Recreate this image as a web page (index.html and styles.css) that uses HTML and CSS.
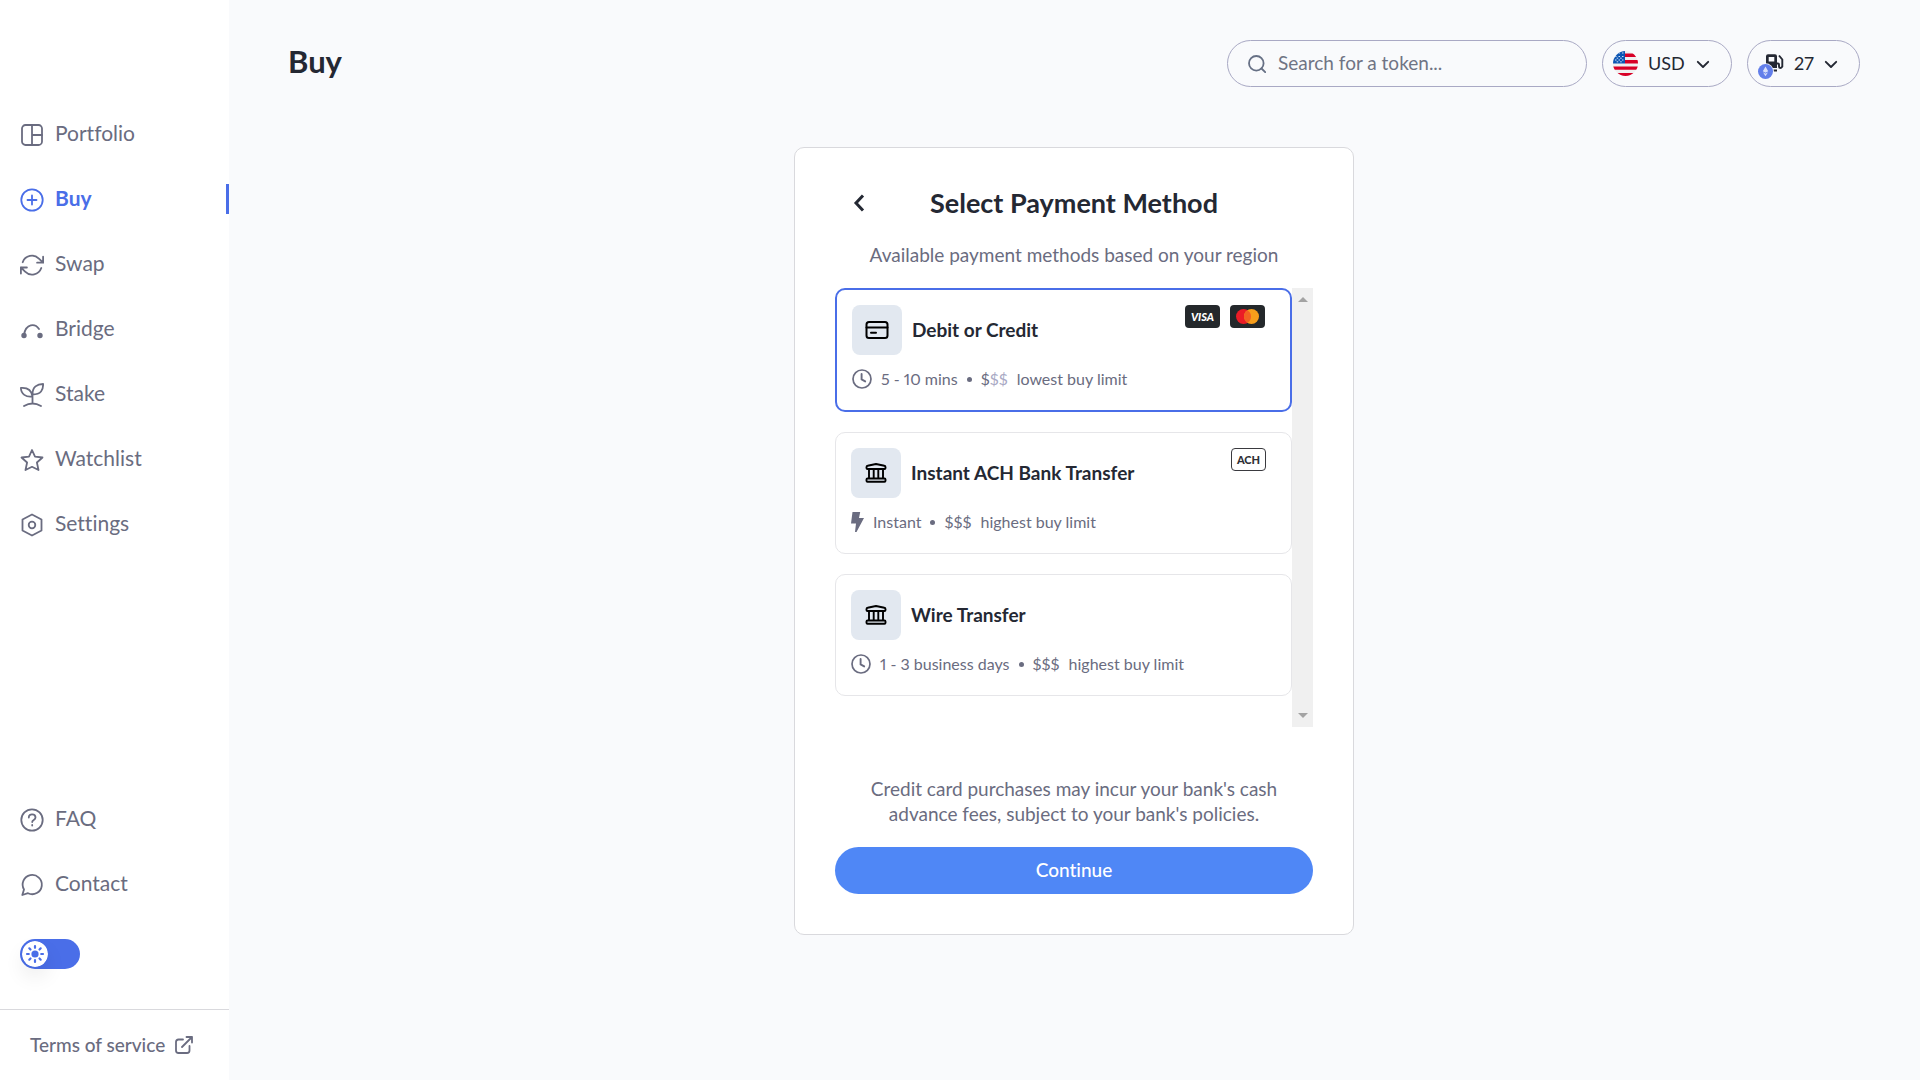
FILE: index.html
```html
<!DOCTYPE html>
<html lang="en">
<head>
<meta charset="utf-8">
<meta name="viewport" content="width=device-width, initial-scale=1">
<title>Buy</title>
<link rel="stylesheet" href="styles.css">
</head>
<body>
<svg class="sprite" aria-hidden="true">
  <symbol id="clock" viewBox="0 0 20 20"><circle cx="10" cy="10" r="9" fill="none" stroke="currentColor" stroke-width="1.700"/><path d="M9.600 5v5.400l3.600 2" fill="none" stroke="currentColor" stroke-width="1.900" stroke-linecap="round" stroke-linejoin="round"/></symbol>
  <symbol id="bank" viewBox="0 0 24 24"><path d="M2.500 6.300Q2.500 5 3.600 4.800L12 3l8.400 1.800Q21.500 5 21.500 6.300V7q0 1-1 1h-17q-1 0-1-1zM5 8.500v8.500M9.700 8.500v8.500M14.300 8.500v8.500M19 8.500v8.500M3.500 17.500h17q1 0 1 1v1.200q0 1-1 1h-17q-1 0-1-1v-1.200q0-1 1-1z" fill="none" stroke="currentColor" stroke-width="1.900" stroke-linejoin="round"/></symbol>
  <symbol id="chevron" viewBox="0 0 14 14"><path d="M1.800 4.800 7 10l5.200-5.200" fill="none" stroke="currentColor" stroke-width="1.900" stroke-linecap="round" stroke-linejoin="round"/></symbol>
</svg>
<div class="app">
  <aside class="sidebar">
    <nav class="nav" aria-label="Main">
      <a class="nav-link" href="#portfolio"><svg class="icon" viewBox="0 0 24 24"><rect x="2" y="2" width="20" height="20" rx="3.500"/><path d="M12 2v20M12 12h10"/></svg>Portfolio</a>
      <a class="nav-link active" href="#buy" aria-current="page"><svg class="icon" viewBox="0 0 24 24"><circle cx="12" cy="12" r="10.700"/><path d="M12 7.500v9M7.500 12h9"/></svg>Buy</a>
      <a class="nav-link" href="#swap"><svg class="icon" viewBox="0 0 24 24"><path d="M23.100 3.700v6h-6M.9 20.500v-6h6M2.700 9.200a9.800 9.800 0 0 1 16.200-3.600l4.200 4.100M.9 14.500l4.200 4.100A9.800 9.800 0 0 0 21.300 15"/></svg>Swap</a>
      <a class="nav-link" href="#bridge"><svg class="icon" viewBox="0 0 24 24"><path d="M4 16.500C6 5.500 15 5 19 11"/><circle class="solid" cx="4" cy="17.500" r="1.800"/><circle class="solid" cx="20" cy="17.500" r="1.800"/></svg>Bridge</a>
      <a class="nav-link" href="#stake"><svg class="icon" viewBox="0 0 24 24"><path d="M12.500 20.500V11C12.500 4 17 1 23.100 1 23.300 7 21 11.500 12.500 11.500M12.500 13.500C6 14.500 1 11 .9 5 7 4.500 11.500 7 12.500 13.500M4 23q8.500-5 17 0"/></svg>Stake</a>
      <a class="nav-link" href="#watchlist"><svg class="icon" viewBox="0 0 24 24"><path d="m12 2 3 6.700 7.500.8-5.600 5 1.600 7.500-6.500-3.200L5.500 22l1.600-7.500-5.600-5 7.500-.8z"/></svg>Watchlist</a>
      <a class="nav-link" href="#settings"><svg class="icon" viewBox="0 0 24 24"><path d="M12 1.500 21.500 6.500v11L12 22.500 2.500 17.500v-11z"/><circle cx="12" cy="12" r="3.300"/></svg>Settings</a>
    </nav>
    <nav class="nav nav-help" aria-label="Help">
      <a class="nav-link" href="#faq"><svg class="icon" viewBox="0 0 24 24"><circle cx="12" cy="12" r="10.700"/><path d="M8.800 9.500C8.800 5 15.500 5.500 15.500 9.500c0 2.500-3.300 2.300-3.300 4.500M12.200 17v.5"/></svg>FAQ</a>
      <a class="nav-link" href="#contact"><svg class="icon" viewBox="0 0 24 24"><path d="m2.300 22 1.700-5.500a9.600 9.600 0 1 1 4 3.700z"/></svg>Contact</a>
    </nav>
    <label class="switch">
      <input class="hidden-input" type="checkbox" aria-label="Light theme" checked>
      <svg class="thumb" viewBox="0 0 26 26"><circle cx="13" cy="13" r="13" fill="#fff"/><circle cx="13" cy="13" r="3.600" fill="#4a6ee8"/><path d="M13 5v1.800M13 19.200V21M5 13h1.800M19.200 13H21M7.300 7.300l1.200 1.200M17.500 17.500l1.200 1.200M7.300 18.700l1.200-1.200M17.500 8.500l1.200-1.200" stroke="#4a6ee8" stroke-width="2.200" stroke-linecap="round"/></svg>
    </label>
    <div class="legal">
      <a class="legal-link" href="#terms">Terms of service
        <svg class="icon-link" viewBox="0 0 18 18"><path d="M8 3.500H3.500Q1 3.500 1 6v8.500Q1 17 3.500 17H12q2.500 0 2.500-2.500V10M11.500 1H17v5.500M17 1 7 11"/></svg></a>
    </div>
  </aside>

  <main class="main">
    <header class="topbar">
      <h1 class="page-title">Buy</h1>
      <label class="pill search">
        <svg class="search-icon" viewBox="0 0 18 18"><circle cx="8.300" cy="8.300" r="7.300"/><path d="m13.500 13.500 3.700 3.700"/></svg>
        <input class="search-input" type="search" placeholder="Search for a token..." aria-label="Search for a token">
      </label>
      <label class="pill currency">
        <svg class="flag" viewBox="0 0 25 25"><clipPath id="disc"><circle cx="12.500" cy="12.500" r="12.500"/></clipPath><g clip-path="url(#disc)"><path fill="#f0f0f0" d="M0 0h25v25H0z"/><path fill="#d80027" d="M12 2.500h13v3.500H12zM12 9h13v3.500H12zM0 15.500h25v3.300H0zM0 22h25v3H0z"/><path fill="#0d56b3" d="M0 0h12v12.500H0z"/><path d="M2 5.500h1.500M5.500 5.500H7M9 5.500h1.500M2 9h1.500M5.500 9H7M9 9h1.500M5.500 2H7M9 2h1.500M3.700 7.200h1.500M7.200 7.200h1.500M3.700 10.800h1.500M7.200 10.800h1.500" stroke="#cfe0f5"/></g></svg>
        <select class="currency-select" aria-label="Currency"><option>USD</option></select>
        <svg class="chevron"><use href="#chevron"/></svg>
      </label>
      <button class="pill gas" type="button" aria-label="Gas price 27">
        <svg class="gas-icon" viewBox="0 0 26 30"><path fill="#242833" fill-rule="evenodd" d="M10 5.300h7q2 0 2 2V19H8V7.300q0-2 2-2zM10.700 8v4.500h5.600V8z"/><path d="M19 14.500h1q1 0 1 1v2q0 1.500 1.200 1.500T24.300 17.500V10.500L21 6.500M15.500 21.500h3.500" fill="none" stroke="#242833" stroke-width="1.900"/><circle cx="7.500" cy="22.500" r="8.300" fill="#f9fafc"/><circle cx="7.500" cy="22.500" r="7.500" fill="#627eea"/><path fill="#fff" d="m7.500 17.500 2.700 4.700-2.700 1.600-2.700-1.600zm0 7.200 2.500-1.500-2.500 4-2.500-4z" opacity=".75"/></svg>
        <span class="gas-value">27</span>
        <svg class="chevron"><use href="#chevron"/></svg>
      </button>
    </header>

    <form class="card">
      <div class="card-head">
        <button class="back" type="button" aria-label="Back"><svg class="back-icon" viewBox="0 0 12 18"><path d="M10 1.500 3 9l7 7.500" fill="none" stroke="currentColor" stroke-width="3"/></svg></button>
        <h2 class="card-title">Select Payment Method</h2>
      </div>
      <p class="subtitle">Available payment methods based on your region</p>
      <div class="methods">
        <div class="method-list" role="radiogroup" aria-label="Payment method">
          <label class="method selected">
            <input class="hidden-input" type="radio" name="method" checked>
            <span class="method-top">
              <span class="method-icon"><svg class="glyph" viewBox="0 0 24 24"><rect x="1.500" y="4" width="21" height="16" rx="2.500" fill="none" stroke="currentColor" stroke-width="2"/><path d="M1.500 9.500h21M6 14.700h5" stroke="currentColor" stroke-width="2" stroke-linecap="round"/></svg></span>
              <span class="method-name">Debit or Credit</span>
              <span class="badges">
                <span class="badge visa">VISA</span>
                <span class="badge"><svg class="mastercard" viewBox="0 0 23 15"><circle cx="7.500" cy="7.500" r="7.500" fill="#eb1c26"/><circle cx="15.500" cy="7.500" r="7.500" fill="#f79e1b"/><path d="M11.500 1.150a7.500 7.500 0 0 1 0 12.700 7.500 7.500 0 0 1 0-12.700z" fill="#f26122"/></svg></span>
              </span>
            </span>
            <span class="meta"><svg class="meta-icon"><use href="#clock"/></svg><span>5 - 10 mins</span><span class="dot"></span><span>$<span class="faint">$$</span></span><span>lowest buy limit</span></span>
          </label>
          <label class="method">
            <input class="hidden-input" type="radio" name="method">
            <span class="method-top">
              <span class="method-icon"><svg class="glyph"><use href="#bank"/></svg></span>
              <span class="method-name">Instant ACH Bank Transfer</span>
              <span class="badges"><span class="badge ach">ACH</span></span>
            </span>
            <span class="meta"><svg class="bolt" viewBox="0 0 13 20"><path fill="currentColor" d="M1.500 0h7.700L8 6h5L5.500 20H4l1-8.500H0z"/></svg><span>Instant</span><span class="dot"></span><span>$$$</span><span>highest buy limit</span></span>
          </label>
          <label class="method">
            <input class="hidden-input" type="radio" name="method">
            <span class="method-top">
              <span class="method-icon"><svg class="glyph"><use href="#bank"/></svg></span>
              <span class="method-name">Wire Transfer</span>
            </span>
            <span class="meta"><svg class="meta-icon"><use href="#clock"/></svg><span>1 - 3 business days</span><span class="dot"></span><span>$$$</span><span>highest buy limit</span></span>
          </label>
        </div>
        <div class="scroll-track" aria-hidden="true">
          <svg class="arrow" viewBox="0 0 10 5"><path d="M0 5 5 0l5 5z"/></svg>
          <svg class="arrow" viewBox="0 0 10 5"><path d="m0 0 5 5 5-5z"/></svg>
        </div>
      </div>
      <p class="notice">Credit card purchases may incur your bank's cash advance fees, subject to your bank's policies.</p>
      <button class="continue" type="button">Continue</button>
    </form>
  </main>
</div>
</body>
</html>
```
FILE: styles.css
```css
:root {
  --text: #242833;
  --muted: #6a6c80;
  --accent: #4a6ee8;
  --line: #d9d9dd;
}

* { box-sizing: border-box; }

body {
  margin: 0;
  background: #f9fafc;
  color: var(--text);
  font-family: Lato, "Open Sans", sans-serif;
  font-size: 19px;
  font-variant-ligatures: none;
  font-variant-numeric: proportional-nums;
  line-height: 25px;
}

a { color: inherit; text-decoration: none; }
h1, h2, p { margin: 0; }
svg { flex: none; }
button, input, select { font: inherit; color: inherit; }
button { cursor: pointer; }

.sprite { display: none; }

.hidden-input {
  position: absolute;
  width: 1px;
  height: 1px;
  margin: 0;
  opacity: 0;
}

.app { display: flex; min-height: 100vh; }

/* Sidebar */
.sidebar {
  display: flex;
  flex: none;
  flex-direction: column;
  width: 229px;
  padding-top: 119px;
  background: #fff;
  color: var(--muted);
}

.nav { display: flex; flex-direction: column; gap: 35px; }
.nav-help { margin-top: auto; padding-top: 35px; }

.nav-link {
  display: flex;
  align-items: center;
  gap: 11px;
  height: 30px;
  padding: 0 0 3px 20px;
  border-right: 3px solid transparent;
  font-size: 21px;
}

.nav-link.active {
  border-right-color: var(--accent);
  color: var(--accent);
  font-weight: 700;
}

.icon, .icon-link, .search-icon {
  fill: none;
  stroke: currentColor;
  stroke-width: 1.8px;
  stroke-linecap: round;
  stroke-linejoin: round;
}
.icon { width: 24px; height: 24px; margin-top: 4px; }
.icon .solid { fill: currentColor; }
.icon-link { width: 18px; height: 18px; }

.switch {
  display: flex;
  align-items: center;
  width: 60px;
  height: 30px;
  margin: 40px 20px;
  padding: 0 2px;
  border-radius: 15px;
  background: var(--accent);
  cursor: pointer;
}

.thumb {
  width: 26px;
  height: 26px;
  border-radius: 50%;
  box-shadow: 0 10px 20px rgba(0, 0, 0, 0.08);
}

.legal { padding: 22px 30px 23px; border-top: 1px solid var(--line); }
.legal-link {
  display: flex;
  align-items: center;
  gap: 10px;
  font-weight: 500;
  white-space: nowrap;
}

/* Top bar */
.main { flex: 1; min-width: 0; padding: 40px 60px 40px 59px; }
.topbar { display: flex; align-items: center; gap: 15px; }

.page-title {
  align-self: flex-start;
  margin-right: auto;
  font-size: 31px;
  line-height: 42px;
}

.pill {
  display: flex;
  align-items: center;
  height: 47px;
  border: 1px solid #a9a9c4;
  border-radius: 24px;
  background: transparent;
}

.search { flex: 0 1 360px; gap: 12px; padding: 0 20px; }
.search-icon { width: 18px; height: 18px; color: #667085; }
.search-input {
  flex: 1;
  min-width: 0;
  padding: 0 0 2px;
  border: 0;
  outline: 0;
  background: transparent;
}
.search-input::placeholder { color: #6f7484; opacity: 1; }

.currency, .gas { gap: 10px; padding: 0 21px 0 10px; font-size: 18px; }
.currency { width: 130px; }
.flag { width: 25px; height: 25px; }
.currency-select {
  flex: 1;
  min-width: 0;
  padding: 0;
  border: 0;
  outline: 0;
  appearance: none;
  background: transparent;
}

.gas { width: 113px; }
.gas-value { flex: 1; text-align: left; }
.gas-icon { width: 26px; height: 30px; }
.chevron { width: 14px; height: 14px; }

/* Payment card */
.card {
  max-width: 560px;
  margin: 60px auto 0;
  padding: 40px;
  border: 1px solid var(--line);
  border-radius: 10px;
  background: #fff;
}

.card-head {
  display: grid;
  grid-template-columns: 48px 1fr 48px;
  align-items: center;
}

.back {
  display: flex;
  justify-content: center;
  padding: 0;
  border: 0;
  background: none;
}
.back-icon { width: 12px; height: 18px; }

.card-title { font-size: 27px; line-height: 30px; text-align: center; }
.subtitle { margin: 24px 0 21px; color: var(--muted); text-align: center; }

.methods { display: flex; }
.method-list {
  display: flex;
  flex: 1;
  flex-direction: column;
  gap: 20px;
  padding-bottom: 31px;
}

.method {
  display: flex;
  flex-direction: column;
  gap: 14px;
  padding: 15px 15px 21px;
  border: 1px solid #e6e6e9;
  border-radius: 10px;
  cursor: pointer;
}
.method.selected { border: 2px solid var(--accent); }

.method-top { display: flex; align-items: center; gap: 10px; }
.method-icon {
  display: flex;
  align-items: center;
  justify-content: center;
  width: 50px;
  height: 50px;
  border-radius: 8px;
  background: #e2e8f0;
  color: #000;
}
.glyph { width: 24px; height: 24px; }
.method-name { padding-bottom: 2px; font-weight: 700; }

.badges {
  display: flex;
  align-self: flex-start;
  gap: 10px;
  margin: 0 10px 0 auto;
}
.badge {
  display: flex;
  align-items: center;
  justify-content: center;
  width: 35px;
  height: 23px;
  border-radius: 4px;
  background: #24282b;
  color: #fff;
  font-size: 11px;
  font-weight: 900;
  line-height: 12px;
}
.visa { font-style: italic; }
.ach { border: 1px solid #3a3a3f; background: #fff; color: #303036; }
.mastercard { width: 23px; height: 15px; }

.meta {
  display: flex;
  align-items: center;
  gap: 9px;
  color: var(--muted);
  font-size: 16px;
  line-height: 20px;
}
.meta-icon { width: 20px; height: 20px; }
.bolt { width: 13px; height: 20px; }
.dot { width: 5px; height: 5px; border-radius: 50%; background: currentColor; }
.faint { color: #a9a9c4; }

.scroll-track {
  display: flex;
  flex-direction: column;
  align-items: center;
  justify-content: space-between;
  width: 21px;
  padding: 9px 0;
  background: #f0f0f0;
}
.arrow { width: 10px; height: 5px; fill: #a3a3a3; }

.notice {
  max-width: 440px;
  margin: 49px auto 21px;
  color: var(--muted);
  text-align: center;
}

.continue {
  width: 100%;
  height: 47px;
  padding: 0 0 2px;
  border: 0;
  border-radius: 24px;
  background: #4f87f6;
  color: #fff;
  font-weight: 500;
}
```
